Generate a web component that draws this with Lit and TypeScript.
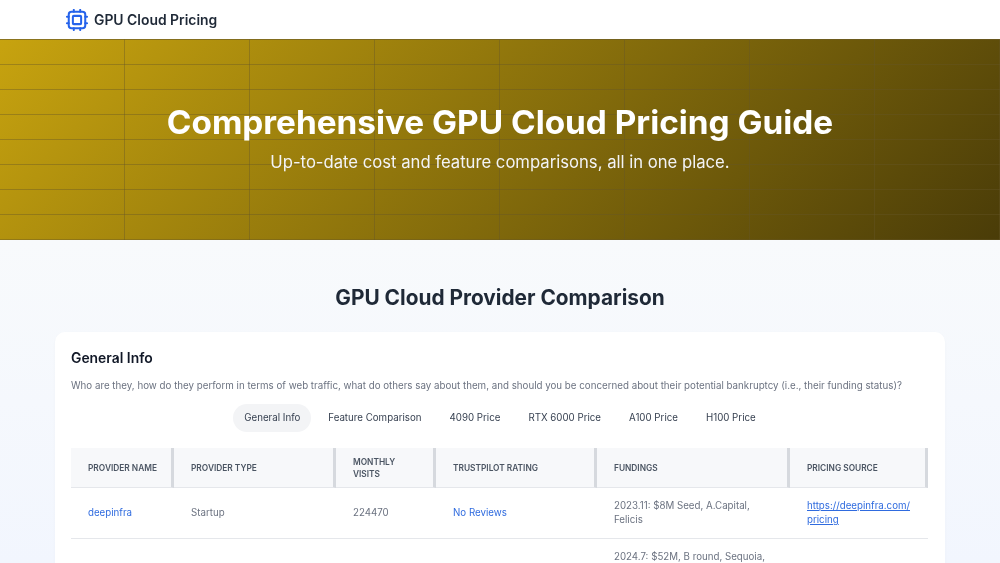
import { LitElement, html, css } from "lit";
import { customElement } from "lit/decorators.js";

@customElement("app-root")
export class AppRoot extends LitElement {
  static styles = css`
    :host { display: block; height: 563px; overflow: hidden; font-family: Inter, "Liberation Sans", sans-serif; background: linear-gradient(180deg, #f8fafc 240px, #f2f6fe 100%); }
    .page { filter: blur(.35px); }
    .nav { height: 39px; background: #fff; display: flex; align-items: center; gap: 6px; padding-left: 66px; }
    .nav svg { display: block; }
    .brand { font-size: 13.9px; font-weight: 600; color: #1f2937; }
    .hero { height: 200.5px; box-sizing: border-box; border-top: 1px solid rgba(130,110,40,.4); display: flex; flex-direction: column; align-items: center; text-align: center; color: #fff;
      background-image:
        linear-gradient(90deg, transparent 123.6px, rgba(100,85,40,.4) 123.6px, rgba(100,85,40,.4) 125px),
        linear-gradient(180deg, transparent 24px, rgba(100,85,40,.4) 24px, rgba(100,85,40,.4) 25px),
        linear-gradient(135deg, #c7a30f 0%, #4a3c08 100%);
      background-size: 125px 100%, 100% 25px, 100% 100%;
    }
    h1 { margin: 60px 0 0; font-size: 33.33px; line-height: 44px; font-weight: 700; }
    .sub { margin: 6px 0 0; font-size: 16.67px; line-height: 24px; font-weight: 400; color: #f3f4f6; }
    h2 { margin: 43.5px 0 19px; text-align: center; font-size: 20.83px; line-height: 30px; font-weight: 700; color: #1f2937; }
    .card { margin: 0 55px; background: #fff; border-radius: 10px; padding: 15.5px 16px 0; box-shadow: 0 1px 3px rgba(0,0,0,.03); }
    h3 { margin: 0; font-size: 13.9px; line-height: 20px; font-weight: 600; color: #111827; }
    .desc { margin: 10.5px 0 0; font-size: 9.75px; line-height: 16px; color: #6b7280; }
    .tabs { display: flex; justify-content: center; gap: 6px; margin-top: 10px; }
    .tab { padding: 0 11px; height: 28px; line-height: 28px; font-size: 9.72px; color: #374151; border-radius: 14px; }
    .tab.on { background: #f3f4f6; }
    .cols { display: grid; grid-template-columns: 103px 162px 100px 161px 193px 138px; width: 857px; margin-top: 16px; }
    .th { height: 40px; box-sizing: border-box; background: #f7f8fa; border-right: 3px solid #d6d9de; border-bottom: 1px solid #e5e7eb; padding: 0 8px 0 17px; display: flex; align-items: center; font-size: 8.33px; line-height: 12px; font-weight: 600; color: #4b5563; }
    .th.wrap { padding-right: 40px; }
    .td { height: 51px; box-sizing: border-box; border-bottom: 1px solid #e5e7eb; padding: 0 17px; display: flex; align-items: center; font-size: 9.72px; line-height: 14px; color: #6b7280; }
    .td a { color: #2f6bdf; text-decoration: none; }
    .td a.u { text-decoration: underline; }
    .td.top { border: 0; align-items: flex-start; padding-top: 11px; }
  `;

  render() {
    const tabs = ["General Info", "Feature Comparison", "4090 Price", "RTX 6000 Price", "A100 Price", "H100 Price"];
    const heads = ["PROVIDER NAME", "PROVIDER TYPE", "MONTHLY VISITS", "TRUSTPILOT RATING", "FUNDINGS", "PRICING SOURCE"];
    return html`
      <div class="page">
        <div class="nav">
          <svg width="22" height="22" viewBox="0 0 24 24" fill="none" stroke="#2563eb" stroke-width="2.2" stroke-linecap="round" stroke-linejoin="round">
            <rect x="3" y="3" width="18" height="18" rx="3"></rect>
            <rect x="7.5" y="7.5" width="9" height="9" rx="1"></rect>
            <path d="M8.5 1v2M15.5 1v2M8.5 21v2M15.5 21v2M21 8.5h2M21 15.5h2M1 8.5h2M1 15.5h2"></path>
          </svg>
          <span class="brand">GPU Cloud Pricing</span>
        </div>
        <div class="hero">
          <h1>Comprehensive GPU Cloud Pricing Guide</h1>
          <div class="sub">Up-to-date cost and feature comparisons, all in one place.</div>
        </div>
        <h2>GPU Cloud Provider Comparison</h2>
        <div class="card">
          <h3>General Info</h3>
          <p class="desc">Who are they, how do they perform in terms of web traffic, what do others say about them, and should you be concerned about their potential bankruptcy (i.e., their funding status)?</p>
          <div class="tabs">${tabs.map((t, i) => html`<div class="tab ${i === 0 ? "on" : ""}">${t}</div>`)}</div>
          <div class="cols">
            ${heads.map((h) => html`<div class="th ${h === "MONTHLY VISITS" ? "wrap" : ""}">${h}</div>`)}
            <div class="td"><a>deepinfra</a></div>
            <div class="td">Startup</div>
            <div class="td">224470</div>
            <div class="td"><a>No Reviews</a></div>
            <div class="td">2023.11: $8M Seed, A.Capital, Felicis</div>
            <div class="td"><a class="u">https://deepinfra.com/ pricing</a></div>
            <div class="td top"></div><div class="td top"></div><div class="td top"></div><div class="td top"></div>
            <div class="td top">2024.7: $52M, B round, Sequoia,</div>
            <div class="td top"></div>
          </div>
        </div>
      </div>
    `;
  }
}
